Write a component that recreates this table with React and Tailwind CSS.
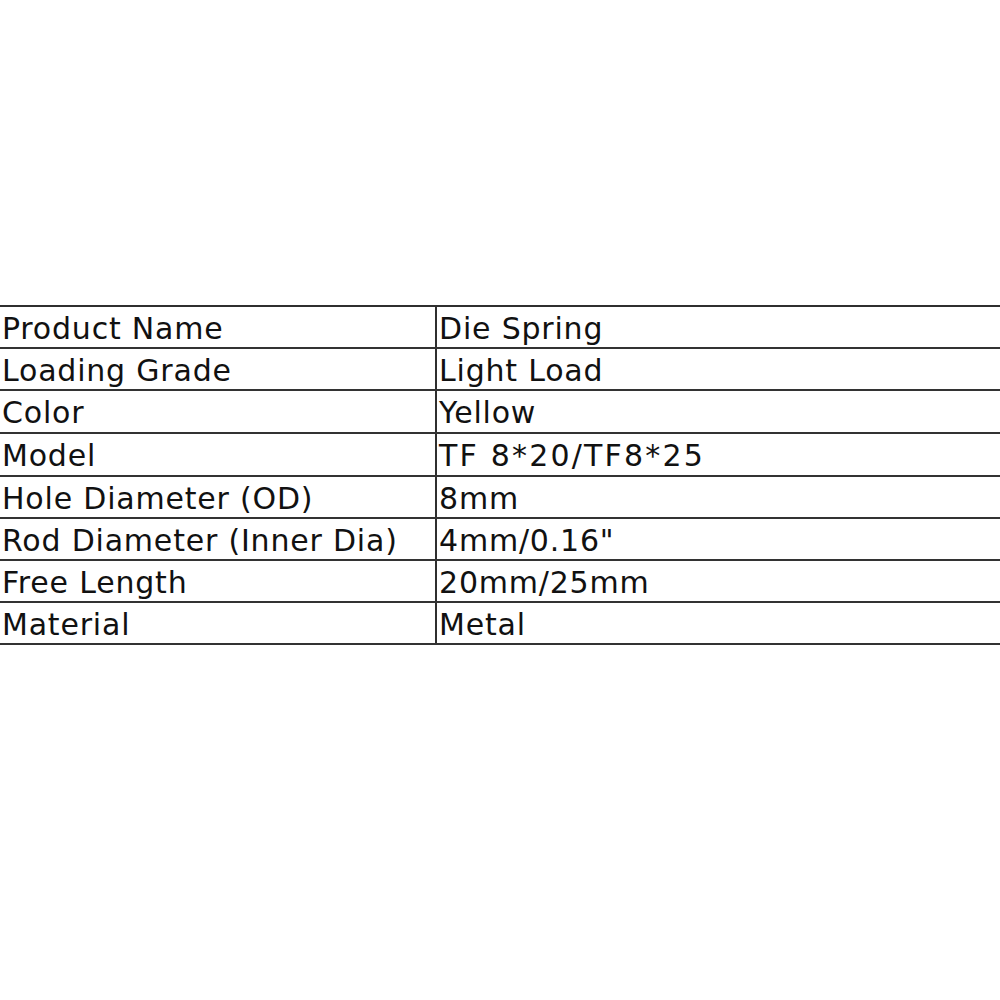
export default function App() {
  const rows = [
    ["Product Name", "Die Spring", "", "h-[42px]"],
    ["Loading Grade", "Light Load", "", "h-[42px]"],
    ["Color", "Yellow", "", "h-[43px]"],
    ["Model", "TF 8*20/TF8*25", "tracking-[2.2px]", "h-[43px]"],
    ["Hole Diameter (OD)", "8mm", "", "h-[42px]"],
    ["Rod Diameter (Inner Dia)", "4mm/0.16\"", "", "h-[42px]"],
    ["Free Length", "20mm/25mm", "", "h-[42px]"],
    ["Material", "Metal", "", "h-[42px]"],
  ];
  return (
    <div className="w-[1000px] h-[1000px] bg-white pt-[305px]" style={{ fontFamily: "Verdana, 'DejaVu Sans', sans-serif" }}>
      <div className="border-t-2 border-[#2f2f2f] text-[#111] text-[30px] tracking-[0.8px]">
        {rows.map(([k, v, t, h]) => (
          <div key={k} className={"flex leading-[36px] border-b-2 border-[#333] " + h}>
            <div className="w-[437px] border-r-2 border-[#2f2f2f] pl-[2px] pt-[4px] whitespace-nowrap">{k}</div>
            <div className={"flex-1 pl-[2px] pt-[4px] whitespace-nowrap " + t}>{v}</div>
          </div>
        ))}
      </div>
    </div>
  );
}
